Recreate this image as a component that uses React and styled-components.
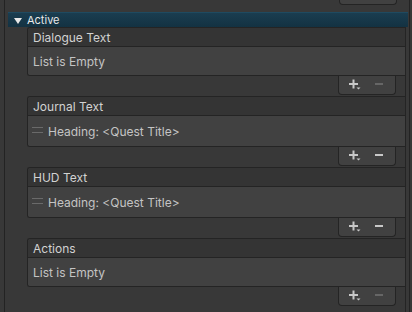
import React from "react";
import styled, { createGlobalStyle } from "styled-components";

const GlobalStyle = createGlobalStyle`
  html, body {
    margin: 0;
    padding: 0;
    background: #383838;
  }
  body {
    font-family: Inter, "Noto Sans", "Liberation Sans", sans-serif;
    font-size: 12px;
    color: #c4c4c4;
  }
`;

const Panel = styled.div`
  margin-left: 4px;
  width: 404px;
  height: 312px;
  border-left: 1px solid #232323;
  border-right: 1px solid #232323;
  overflow: hidden;
`;

const StubRow = styled.div`
  display: flex;
  justify-content: flex-end;
`;

const Foldout = styled.div`
  margin: 7px 1px 0 3px;
  height: 15px;
  display: flex;
  align-items: center;
  gap: 5px;
  padding-left: 6px;
  background: linear-gradient(#1a3d50, #133242);
  border-top: 1px solid #1f4a60;
  box-sizing: border-box;
  color: #e8e8e8;
  font-size: 11px;
`;

const Arrow = styled.span`
  width: 0;
  height: 0;
  border-left: 4px solid transparent;
  border-right: 4px solid transparent;
  border-top: 6px solid #e8e8e8;
  margin-top: 1px;
`;

const Column = styled.div`
  margin-left: 22px;
  width: 378px;
  border-right: 1px solid #242424;
  display: flex;
  flex-direction: column;
  gap: 1px;
  padding-bottom: 20px;
`;

const Card = styled.div`
  display: flex;
  flex-direction: column;
`;

const Box = styled.div`
  border: 1px solid #242424;
  border-right: none;
  border-radius: 3px 0 0 3px;
  overflow: hidden;
`;

const Header = styled.div`
  height: 17px;
  display: flex;
  align-items: center;
  padding: 1px 0 0 5px;
  background: #343434;
  border-bottom: 1px solid #242424;
  color: #d2d2d2;
`;

const Body = styled.div`
  height: ${(p) => (p.$tall ? 30 : 28)}px;
  display: flex;
  align-items: center;
  gap: 5px;
  padding-left: ${(p) => (p.$tall ? 4 : 5)}px;
  background: #414141;
  color: #c4c4c4;
`;

const Handle = styled.span`
  width: 11px;
  height: 4px;
  border-top: 1px solid #6a6a6a;
  border-bottom: 1px solid #6a6a6a;
  margin-top: -3px;
`;

const Footer = styled.div`
  align-self: flex-end;
  margin-right: ${(p) => (p.$stub ? 12 : 9)}px;
  box-sizing: border-box;
  width: 58px;
  height: ${(p) => (p.$stub ? 5 : 19)}px;
  display: flex;
  align-items: center;
  gap: 10px;
  padding-left: 10px;
  background: #414141;
  border: 1px solid #242424;
  border-top: none;
  border-radius: 0 0 4px 4px;
`;

const Tool = styled.svg`
  display: block;
  color: ${(p) => (p.$off ? "#666666" : "#c8c8c8")};
`;

const Plus = () => (
  <Tool width="16" height="12" viewBox="0 0 16 12">
    <rect x="0" y="4" width="9" height="2" fill="currentColor" />
    <rect x="3.5" y="0.5" width="2" height="9" fill="currentColor" />
    <path d="M7.5 8.5h4l-2 2z" fill="currentColor" />
  </Tool>
);

const Minus = ({ off }) => (
  <Tool $off={off} width="10" height="12" viewBox="0 0 10 12">
    <rect x="0" y="4" width="8" height="2" fill="currentColor" />
  </Tool>
);

const lists = [
  { title: "Dialogue Text", item: null },
  { title: "Journal Text", item: "Heading: <Quest Title>" },
  { title: "HUD Text", item: "Heading: <Quest Title>" },
  { title: "Actions", item: null },
];

const ListField = ({ title, item }) => (
  <Card>
    <Box>
      <Header>{title}</Header>
      {item ? (
        <Body $tall>
          <Handle />
          {item}
        </Body>
      ) : (
        <Body>List is Empty</Body>
      )}
    </Box>
    <Footer>
      <Plus />
      <Minus off={!item} />
    </Footer>
  </Card>
);

export default function App() {
  return (
    <>
      <GlobalStyle />
      <Panel>
        <StubRow>
          <Footer $stub />
        </StubRow>
        <Foldout>
          <Arrow />
          Active
        </Foldout>
        <Column>
          {lists.map((l) => (
            <ListField key={l.title} title={l.title} item={l.item} />
          ))}
        </Column>
      </Panel>
    </>
  );
}
